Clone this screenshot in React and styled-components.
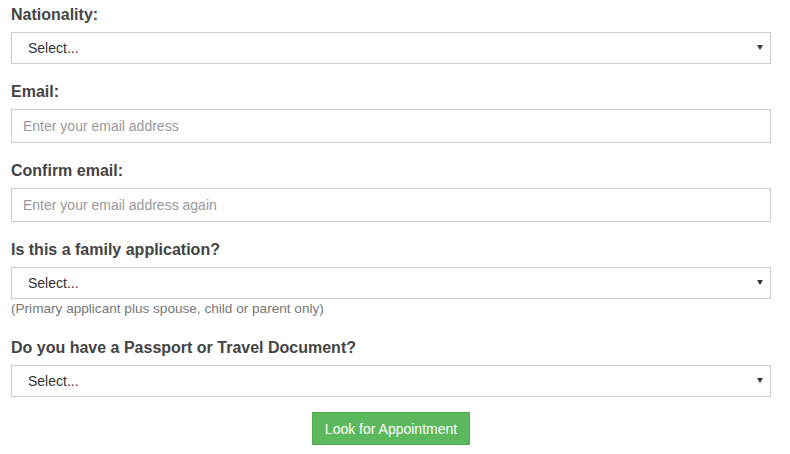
import React from "react";
import styled, { createGlobalStyle } from "styled-components";

const GlobalStyle = createGlobalStyle`
  html, body {
    margin: 0;
    padding: 0;
    background: #fff;
  }
  * {
    box-sizing: border-box;
  }
`;

const Form = styled.form`
  width: 760px;
  margin-left: 11px;
  padding-top: 5px;
  font-family: "Liberation Sans", Arial, sans-serif;
  display: flex;
  flex-direction: column;
`;

const Group = styled.div`
  display: flex;
  flex-direction: column;
  margin-bottom: 18px;
`;

const Label = styled.label`
  font-size: 16px;
  line-height: 20px;
  font-weight: bold;
  color: #444;
  margin-bottom: 7px;
`;

const SelectWrap = styled.div`
  position: relative;
  height: 32px;
`;

const Select = styled.select`
  appearance: none;
  -webkit-appearance: none;
  width: 100%;
  height: 32px;
  padding: 0 16px;
  border: 1px solid #ccc;
  border-radius: 0;
  background: #fff;
  font-family: inherit;
  font-size: 14px;
  color: #333;
  outline: none;
`;

const Arrow = styled.span`
  position: absolute;
  right: 8px;
  top: 13px;
  width: 0;
  height: 0;
  border-left: 3px solid transparent;
  border-right: 3px solid transparent;
  border-top: 5px solid #333;
  pointer-events: none;
`;

const Input = styled.input`
  width: 100%;
  height: 34px;
  padding: 0 11px;
  border: 1px solid #ccc;
  border-radius: 0;
  font-family: inherit;
  font-size: 14px;
  color: #333;
  outline: none;

  &::placeholder {
    color: #999;
  }
`;

const Help = styled.span`
  font-size: 13.6px;
  line-height: 19px;
  padding-bottom: 2px;
  color: #777;
`;

const Actions = styled.div`
  display: flex;
  justify-content: center;
  margin-top: -3px;
`;

const Button = styled.button`
  height: 33px;
  padding: 0 12px;
  border: 1px solid #4cae4c;
  border-radius: 0;
  background: #5cb85c;
  color: #fff;
  font-family: inherit;
  font-size: 14px;
  cursor: pointer;
`;

function SelectField({ label, help }) {
  return (
    <Group>
      <Label>{label}</Label>
      <SelectWrap>
        <Select defaultValue="">
          <option value="">Select...</option>
        </Select>
        <Arrow />
      </SelectWrap>
      {help && <Help>{help}</Help>}
    </Group>
  );
}

function TextField({ label, placeholder }) {
  return (
    <Group>
      <Label>{label}</Label>
      <Input type="email" placeholder={placeholder} />
    </Group>
  );
}

export default function App() {
  return (
    <>
      <GlobalStyle />
      <Form onSubmit={(e) => e.preventDefault()}>
        <SelectField label="Nationality:" />
        <TextField label="Email:" placeholder="Enter your email address" />
        <TextField
          label="Confirm email:"
          placeholder="Enter your email address again"
        />
        <SelectField
          label="Is this a family application?"
          help="(Primary applicant plus spouse, child or parent only)"
        />
        <SelectField label="Do you have a Passport or Travel Document?" />
        <Actions>
          <Button type="submit">Look for Appointment</Button>
        </Actions>
      </Form>
    </>
  );
}
